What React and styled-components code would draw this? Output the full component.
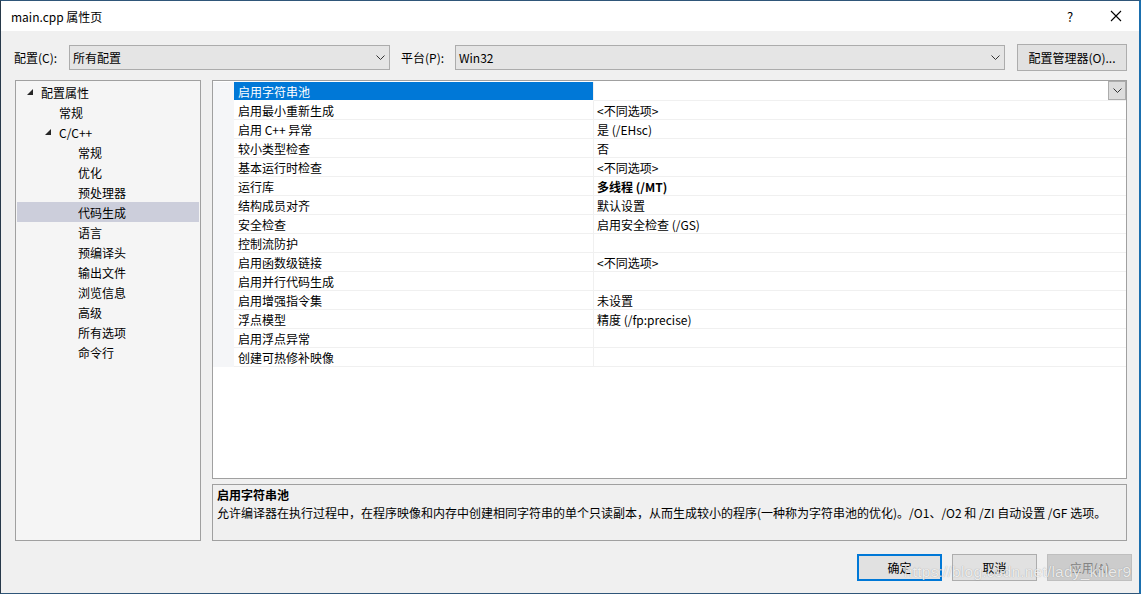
import React from "react";
import styled, { createGlobalStyle } from "styled-components";

const GlobalStyle = createGlobalStyle`
  html, body { margin: 0; padding: 0; background: #f0f0f0; }
  * { box-sizing: border-box; }
  body {
    font-family: "Segoe UI", "Noto Sans CJK SC", "Noto Sans", sans-serif;
    font-size: 12px;
    color: #000;
  }
`;

const FONT = `"Noto Sans CJK SC", "Noto Sans", sans-serif`;

const Window = styled.div`
  position: relative;
  width: 1141px;
  height: 594px;
  background: #f0f0f0;
  border: 1px solid #2f5679;
  border-left-color: #27394a;
  border-right: 2px solid #1b6fae;
  display: flex;
  flex-direction: column;
  font-family: ${FONT};
  font-size: 12px;
  overflow: hidden;
`;

const TitleBar = styled.div`
  height: 30px;
  background: #fff;
  display: flex;
  align-items: center;
  padding-left: 10px;
  flex-shrink: 0;
`;

const Title = styled.div`
  flex: 1;
  font-size: 12px;
  color: #000;
`;

const TitleBtn = styled.div`
  width: 46px;
  height: 30px;
  display: flex;
  align-items: center;
  justify-content: center;
  font-size: 13px;
  color: #000;
`;

const ConfigRow = styled.div`
  display: flex;
  align-items: flex-start;
  padding: 14px 0 0 13px;
  height: 49px;
  flex-shrink: 0;
`;

const Label = styled.span`
  white-space: nowrap;
  width: ${(p) => p.$w}px;
  height: 25px;
  line-height: 25px;
`;

const Combo = styled.div`
  width: ${(p) => p.$w}px;
  height: 25px;
  background: #e5e5e5;
  border: 1px solid #acacac;
  display: flex;
  align-items: center;
  padding-left: 3px;
  margin-right: ${(p) => p.$mr}px;
`;

const ComboText = styled.span`
  flex: 1;
`;

const ChevronBox = styled.div`
  width: 18px;
  display: flex;
  align-items: center;
  justify-content: center;
`;

const Button = styled.div`
  width: ${(p) => p.$w || 85}px;
  height: 27px;
  margin-top: ${(p) => p.$mt || 0}px;
  display: flex;
  align-items: center;
  justify-content: center;
  background: ${(p) => (p.$disabled ? "#cccccc" : "#e1e1e1")};
  border: ${(p) => (p.$primary ? "2px solid #0078d7" : p.$disabled ? "1px solid #bfbfbf" : "1px solid #adadad")};
  color: ${(p) => (p.$disabled ? "#838383" : "#000")};
  white-space: nowrap;
`;

const Main = styled.div`
  display: flex;
  padding: 0 12px 0 14px;
  gap: 11px;
  height: 461px;
  flex-shrink: 0;
`;

const Tree = styled.div`
  width: 186px;
  height: 100%;
  background: #f5f5f5;
  border: 1px solid #a0a0a0;
  padding-top: 1px;
`;

const TreeRow = styled.div`
  height: 20px;
  display: flex;
  align-items: center;
  padding-left: ${(p) => p.$indent}px;
  background: ${(p) => (p.$selected ? "#cccedb" : "transparent")};
  margin: 0 1px;
`;

const Twisty = styled.span`
  width: 24px;
  flex-shrink: 0;
  display: inline-flex;
  align-items: center;
  justify-content: flex-start;
  padding-left: 10px;
  visibility: ${(p) => (p.$hidden ? "hidden" : "visible")};
`;

const RightCol = styled.div`
  flex: 1;
  display: flex;
  flex-direction: column;
  gap: 5px;
`;

const Grid = styled.div`
  height: 399px;
  background: #fff;
  border: 1px solid #a0a0a0;
  padding-top: 1px;
  position: relative;
`;

const GridRow = styled.div`
  display: flex;
  height: 19px;
`;

const Gutter = styled.div`
  width: 21px;
  background: #f5f6f8;
`;

const NameCell = styled.div`
  width: 360px;
  padding-left: 4px;
  display: flex;
  align-items: center;
  background: ${(p) => (p.$selected ? "#0078d7" : "#fff")};
  color: ${(p) => (p.$selected ? "#fff" : "#000")};
  border-bottom: 1px solid ${(p) => (p.$selected ? "#fff" : "#f0f0f0")};
  border-right: 1px solid #f0f0f0;
`;

const ValueCell = styled.div`
  flex: 1;
  padding-left: 3px;
  display: flex;
  align-items: center;
  border-bottom: 1px solid #f0f0f0;
  font-weight: ${(p) => (p.$bold ? 700 : 400)};
  position: relative;
`;

const DropBtn = styled.div`
  position: absolute;
  right: 0;
  top: -1px;
  width: 18px;
  height: 19px;
  background: #dcdcdc;
  border: 1px solid #acacac;
  display: flex;
  align-items: center;
  justify-content: center;
`;

const Desc = styled.div`
  height: 57px;
  background: #f0f0f0;
  border: 1px solid #a0a0a0;
  padding: 1px 4px;
  line-height: 18px;
`;

const DescTitle = styled.div`
  font-weight: 700;
`;

const Footer = styled.div`
  display: flex;
  justify-content: flex-end;
  gap: 10px;
  padding: 13px 7px 0 0;
`;

const Watermark = styled.div`
  position: absolute;
  left: 903px;
  top: 562px;
  font-family: "Liberation Sans", Arial, sans-serif;
  font-size: 15.5px;
  color: rgba(255, 255, 255, 0.82);
  text-shadow: 0 0 1px rgba(0, 0, 0, 0.35);
  white-space: nowrap;
  letter-spacing: 0.2px;
  pointer-events: none;
`;

const Chevron = () => (
  <svg width="9" height="5" viewBox="0 0 9 5">
    <path d="M0.5 0.5 L4.5 4.5 L8.5 0.5" fill="none" stroke="#333" strokeWidth="1" />
  </svg>
);

const Expanded = () => (
  <svg width="6" height="6" viewBox="0 0 6 6">
    <polygon points="6,0 6,6 0,6" fill="#262626" />
  </svg>
);

const CloseIcon = () => (
  <svg width="12" height="12" viewBox="0 0 12 12">
    <path d="M1 1 L11 11 M11 1 L1 11" stroke="#000" strokeWidth="1.1" />
  </svg>
);

const treeItems = [
  { text: "配置属性", indent: 0, twisty: true },
  { text: "常规", indent: 18 },
  { text: "C/C++", indent: 18, twisty: true },
  { text: "常规", indent: 37 },
  { text: "优化", indent: 37 },
  { text: "预处理器", indent: 37 },
  { text: "代码生成", indent: 37, selected: true },
  { text: "语言", indent: 37 },
  { text: "预编译头", indent: 37 },
  { text: "输出文件", indent: 37 },
  { text: "浏览信息", indent: 37 },
  { text: "高级", indent: 37 },
  { text: "所有选项", indent: 37 },
  { text: "命令行", indent: 37 },
];

const rows = [
  ["启用字符串池", ""],
  ["启用最小重新生成", "<不同选项>"],
  ["启用 C++ 异常", "是 (/EHsc)"],
  ["较小类型检查", "否"],
  ["基本运行时检查", "<不同选项>"],
  ["运行库", "多线程 (/MT)", true],
  ["结构成员对齐", "默认设置"],
  ["安全检查", "启用安全检查 (/GS)"],
  ["控制流防护", ""],
  ["启用函数级链接", "<不同选项>"],
  ["启用并行代码生成", ""],
  ["启用增强指令集", "未设置"],
  ["浮点模型", "精度 (/fp:precise)"],
  ["启用浮点异常", ""],
  ["创建可热修补映像", ""],
];

export default function App() {
  return (
    <>
      <GlobalStyle />
      <Window>
        <TitleBar>
          <Title>main.cpp 属性页</Title>
          <TitleBtn>?</TitleBtn>
          <TitleBtn>
            <CloseIcon />
          </TitleBtn>
        </TitleBar>
        <ConfigRow>
          <Label $w={55}>配置(C):</Label>
          <Combo $w={321} $mr={11}>
            <ComboText>所有配置</ComboText>
            <ChevronBox>
              <Chevron />
            </ChevronBox>
          </Combo>
          <Label $w={54}>平台(P):</Label>
          <Combo $w={550} $mr={12}>
            <ComboText>Win32</ComboText>
            <ChevronBox>
              <Chevron />
            </ChevronBox>
          </Combo>
          <Button $w={110} $mt={-1}>配置管理器(O)...</Button>
        </ConfigRow>
        <Main>
          <Tree>
            {treeItems.map((it, i) => (
              <TreeRow key={i} $indent={it.indent} $selected={it.selected}>
                <Twisty $hidden={!it.twisty}>{it.twisty && <Expanded />}</Twisty>
                <span>{it.text}</span>
              </TreeRow>
            ))}
          </Tree>
          <RightCol>
            <Grid>
              {rows.map(([n, v, b], i) => (
                <GridRow key={i}>
                  <Gutter />
                  <NameCell $selected={i === 0}>{n}</NameCell>
                  <ValueCell $bold={b}>
                    {v}
                    {i === 0 && (
                      <DropBtn>
                        <Chevron />
                      </DropBtn>
                    )}
                  </ValueCell>
                </GridRow>
              ))}
            </Grid>
            <Desc>
              <DescTitle>启用字符串池</DescTitle>
              <div>
                允许编译器在执行过程中，在程序映像和内存中创建相同字符串的单个只读副本，从而生成较小的程序(一种称为字符串池的优化)。/O1、/O2 和 /ZI 自动设置 /GF 选项。
              </div>
            </Desc>
          </RightCol>
        </Main>
        <Footer>
          <Button $primary>确定</Button>
          <Button>取消</Button>
          <Button $disabled>应用(A)</Button>
        </Footer>
        <Watermark>https://blog.csdn.net/lady_killer9</Watermark>
      </Window>
    </>
  );
}
